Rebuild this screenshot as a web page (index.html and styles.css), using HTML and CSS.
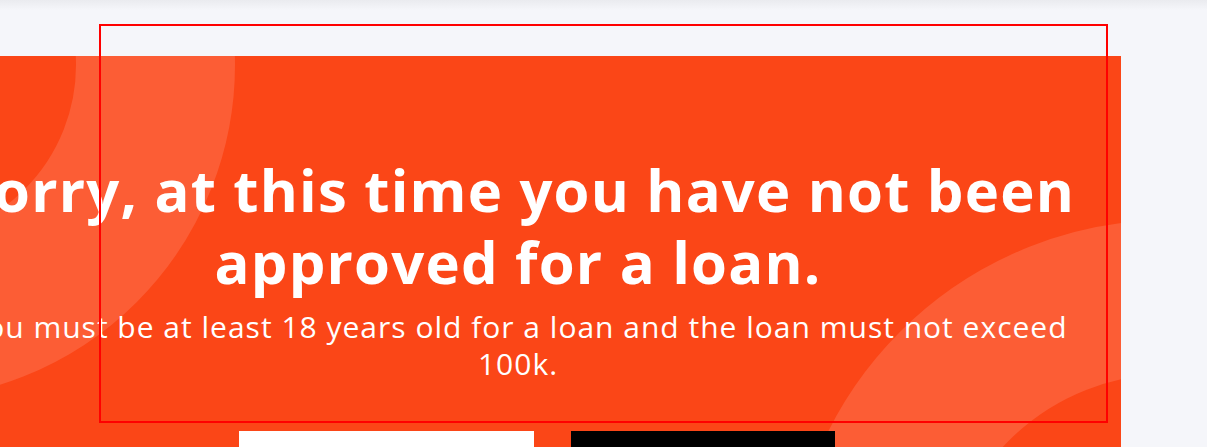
FILE: index.html
```html
<!DOCTYPE html>
<html lang="en">
<head>
<meta charset="utf-8">
<title>Loan not approved</title>
<link rel="stylesheet" href="styles.css">
</head>
<body>
<main class="page">
  <section class="result-panel">
    <span class="ring ring-top"></span>
    <span class="ring ring-bottom"></span>
    <div class="result-content">
      <h1 class="result-title">Sorry, at this time you have not been approved for a loan.</h1>
      <p class="result-text">You must be at least 18 years old for a loan and the loan must not exceed 100k.</p>
      <div class="result-actions">
        <a class="btn btn-light" href="#">Back to home</a>
        <a class="btn btn-dark" href="#">Try again</a>
      </div>
    </div>
  </section>
  <div class="highlight-box"></div>
</main>
</body>
</html>
```

FILE: styles.css
```css
* {
  box-sizing: border-box;
}

html, body {
  margin: 0;
  padding: 0;
  height: 100%;
}

body {
  background: linear-gradient(to bottom, #eaebef 0, #f5f6fa 10px, #f5f6fa 100%);
  font-family: "Open Sans", "Liberation Sans", sans-serif;
  overflow: hidden;
}

.page {
  position: relative;
  padding-top: 56px;
  width: 1207px;
}

.result-panel {
  position: relative;
  width: 1121px;
  height: 420px;
  background: #fb4617;
  overflow: hidden;
  padding-top: 98px;
}

.ring {
  position: absolute;
  border-radius: 50%;
  border-style: solid;
  border-color: #fc5d35;
}

.ring-top {
  left: -435px;
  top: -326px;
  width: 670px;
  height: 670px;
  border-width: 159px;
}

.ring-bottom {
  left: 788px;
  top: 164px;
  width: 764px;
  height: 764px;
  border-width: 154px;
}

.result-content {
  position: relative;
  width: 1160px;
  margin-left: -62px;
  text-align: center;
  color: #ffffff;
}

.result-title {
  margin: 0;
  font-size: 58px;
  line-height: 72px;
  font-weight: 700;
  letter-spacing: 1.2px;
}

.result-text {
  margin: 10px 0 0;
  font-size: 30px;
  line-height: 37px;
  font-weight: 400;
  letter-spacing: 1px;
}

.result-actions {
  display: flex;
  justify-content: center;
  gap: 37px;
  margin-top: 49px;
  padding-left: 38px;
}

.btn {
  display: flex;
  align-items: center;
  justify-content: center;
  height: 64px;
  font-size: 16px;
  font-weight: 600;
  text-decoration: none;
}

.btn-light {
  width: 295px;
  background: #ffffff;
  color: #fb4617;
}

.btn-dark {
  width: 264px;
  background: #000000;
  color: #ffffff;
}

.highlight-box {
  position: absolute;
  left: 99px;
  top: 24px;
  width: 1009px;
  height: 399px;
  border: 2px solid #ff0000;
  pointer-events: none;
}
```
